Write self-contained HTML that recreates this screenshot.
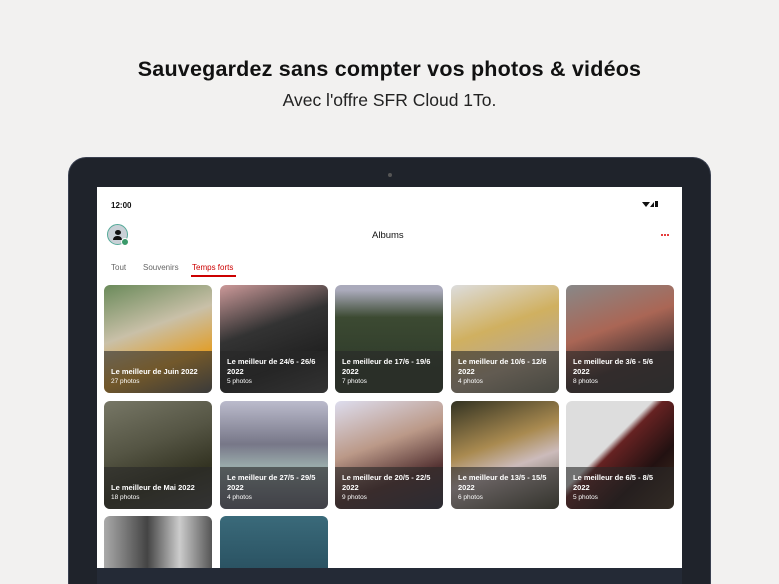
<!DOCTYPE html>
<html><head><meta charset="utf-8"><style>
*{margin:0;padding:0;box-sizing:border-box}
html,body{width:779px;height:584px;overflow:hidden}
body{background:#f2f1f0;font-family:"Liberation Sans",sans-serif;position:relative}
h1{position:absolute;top:57px;width:100%;text-align:center;font-size:21.5px;font-weight:bold;color:#111;letter-spacing:.2px}
.sub{position:absolute;top:90px;width:100%;text-align:center;font-size:17.5px;color:#222}
.dev{position:absolute;left:68px;top:157px;width:643px;height:427px;background:#1f232b;border-radius:18px 18px 0 0;border:1px solid #3a4050;border-bottom:none}
.cam{position:absolute;left:388px;top:173px;width:4px;height:4px;border-radius:50%;background:#555}
.scr{position:absolute;left:97px;top:187px;width:585px;height:397px;background:#fff;overflow:hidden}
.nav{position:absolute;left:0;top:381px;width:585px;height:16px;background:#242a36}
.t{position:absolute;font-size:8px;color:#111}
.tile{position:absolute;width:108px;height:108px;border-radius:6px;overflow:hidden}
.ov{position:absolute;left:0;right:0;bottom:0;height:42px;background:rgba(40,40,40,.6);padding:6px 7px 0;color:#fff}
.ov b{display:block;font-size:7.5px;line-height:10px}
.ov span{font-size:6.5px;display:block;margin-top:1px}
.ov.one{padding-top:16px}
.dot{position:absolute;top:47px;width:2px;height:2px;background:#d00;border-radius:50%}
</style></head><body>
<h1>Sauvegardez sans compter vos photos &amp; vidéos</h1>
<div class="sub">Avec l'offre SFR Cloud 1To.</div>
<div class="dev"></div>
<div class="cam"></div>
<div class="scr">
 <div class="t" style="left:14px;top:14px;font-weight:bold">12:00</div>
 <div style="position:absolute;left:545px;top:15px;width:0;height:0;border-left:4px solid transparent;border-right:4px solid transparent;border-top:5px solid #111"></div>
 <div style="position:absolute;left:553px;top:15px;width:0;height:0;border-left:4px solid transparent;border-bottom:5px solid #111"></div>
 <div style="position:absolute;left:558px;top:14px;width:3px;height:6px;background:#111"></div>
 <div style="position:absolute;left:10px;top:37px;width:21px;height:21px;border-radius:50%;background:#c9d0d6;border:1.5px solid #5a9"></div>
 <div style="position:absolute;left:17.5px;top:43px;width:6px;height:5px;border-radius:50%;background:#111"></div>
 <div style="position:absolute;left:16px;top:49px;width:9px;height:4px;border-radius:4px 4px 0 0;background:#111"></div>
 <div style="position:absolute;left:24px;top:51px;width:8px;height:8px;border-radius:50%;background:#3a9a6a;border:1px solid #fff"></div>
 <div class="t" style="left:275px;top:43px;font-size:9.5px">Albums</div>
 <div class="dot" style="left:564px"></div><div class="dot" style="left:567px"></div><div class="dot" style="left:570px"></div>
 <div class="t" style="left:14px;top:76px;color:#666">Tout</div>
 <div class="t" style="left:46px;top:76px;color:#666">Souvenirs</div>
 <div class="t" style="left:95px;top:76px;color:#c00">Temps forts</div>
 <div style="position:absolute;left:94px;top:88px;width:45px;height:2px;background:#c00"></div>

 <div class="tile" style="left:7px;top:98px;background:linear-gradient(160deg,#6a8a5a,#c9c0a8 40%,#e0a030 70%,#555)"><div class="ov one"><b>Le meilleur de Juin 2022</b><span>27 photos</span></div></div>
 <div class="tile" style="left:123px;top:98px;background:linear-gradient(160deg,#c99 ,#333 40%,#222 70%,#444)"><div class="ov"><b>Le meilleur de 24/6 - 26/6 2022</b><span>5 photos</span></div></div>
 <div class="tile" style="left:238px;top:98px;background:linear-gradient(180deg,#aab 5%,#3c4a32 30%,#2e3a2a 80%)"><div class="ov"><b>Le meilleur de 17/6 - 19/6 2022</b><span>7 photos</span></div></div>
 <div class="tile" style="left:354px;top:98px;background:linear-gradient(160deg,#ddd,#d0b060 40%,#b9a890 70%,#776)"><div class="ov"><b>Le meilleur de 10/6 - 12/6 2022</b><span>4 photos</span></div></div>
 <div class="tile" style="left:469px;top:98px;background:linear-gradient(160deg,#888,#a65 40%,#433 70%,#333)"><div class="ov"><b>Le meilleur de 3/6 - 5/6 2022</b><span>8 photos</span></div></div>

 <div class="tile" style="left:7px;top:214px;background:linear-gradient(160deg,#776,#554 40%,#332 70%,#444)"><div class="ov one"><b>Le meilleur de Mai 2022</b><span>18 photos</span></div></div>
 <div class="tile" style="left:123px;top:214px;background:linear-gradient(180deg,#bbc,#778 40%,#9aa 60%,#667)"><div class="ov"><b>Le meilleur de 27/5 - 29/5 2022</b><span>4 photos</span></div></div>
 <div class="tile" style="left:238px;top:214px;background:linear-gradient(160deg,#dde,#b98 40%,#533 70%,#334)"><div class="ov"><b>Le meilleur de 20/5 - 22/5 2022</b><span>9 photos</span></div></div>
 <div class="tile" style="left:354px;top:214px;background:linear-gradient(160deg,#332,#a98a50 40%,#cbb 60%,#443)"><div class="ov"><b>Le meilleur de 13/5 - 15/5 2022</b><span>6 photos</span></div></div>
 <div class="tile" style="left:469px;top:214px;background:linear-gradient(135deg,#ddd 40%,#622 45%,#211 70%,#432)"><div class="ov"><b>Le meilleur de 6/5 - 8/5 2022</b><span>5 photos</span></div></div>

 <div class="tile" style="left:7px;top:329px;background:linear-gradient(90deg,#aaa,#444 40%,#ccc 70%,#555)"></div>
 <div class="tile" style="left:123px;top:329px;background:linear-gradient(180deg,#3a6a7a,#1a3a4a)"></div>
 <div class="nav"></div>
</div>
</body></html>
